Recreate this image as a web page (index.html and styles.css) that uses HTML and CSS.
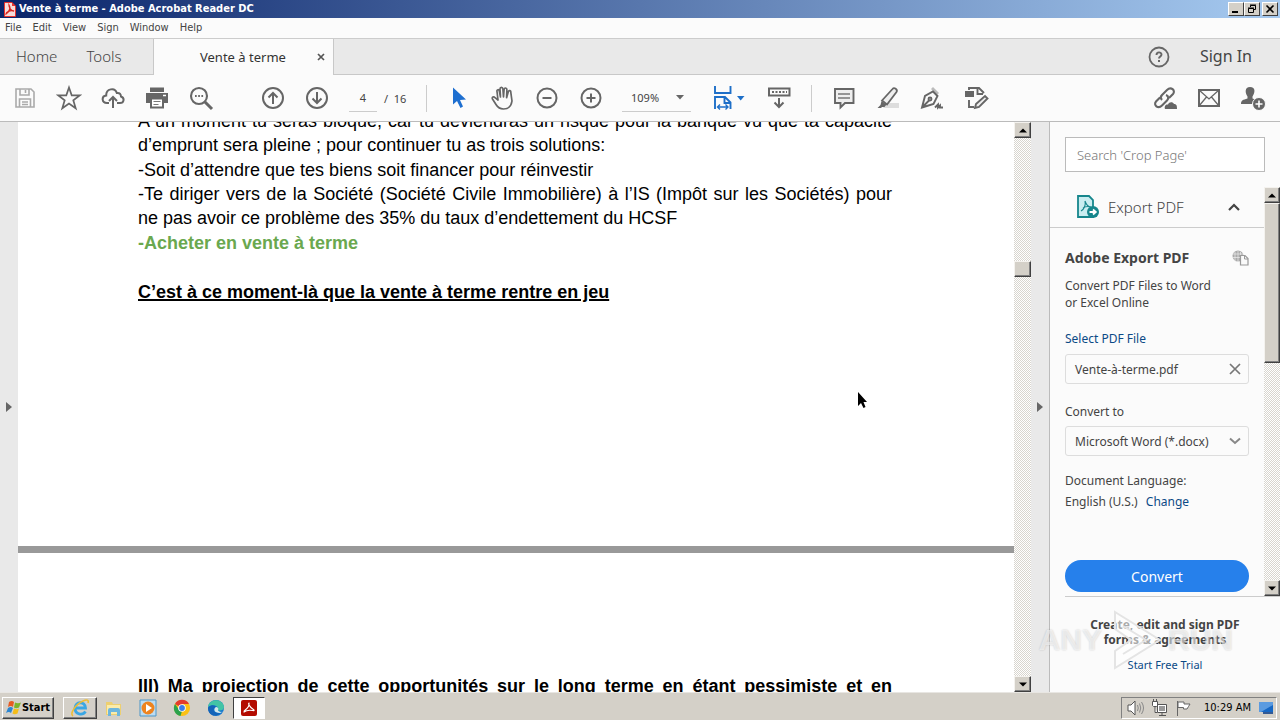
FILE: index.html
```html
<!DOCTYPE html>
<html lang="en">
<head>
<meta charset="utf-8">
<title>Vente à terme - Adobe Acrobat Reader DC</title>
<link rel="stylesheet" href="styles.css">
</head>
<body>
<header class="titlebar">
  <svg class="app-icon" width="12" height="15" viewBox="0 0 12 15"><path d="M1 0h7l4 4v10q0 1-1 1H1q-1 0-1-1V1q0-1 1-1z" fill="#e9322d"/><path d="M1 1h7v3h3v10H1z" fill="#f6dcda"/><path d="M5 3c2 3 1 6-3 9 0-2 4-4 8-3-3 0-5-3-5-6z" fill="none" stroke="#d8231d" stroke-width="1.3"/></svg>
  <h1 class="title">Vente à terme - Adobe Acrobat Reader DC</h1>
  <div class="win-buttons">
    <button class="win-btn" aria-label="Minimize"><svg width="10" height="10" viewBox="0 0 10 10"><path d="M1 8h6" stroke="#000" stroke-width="2"/></svg></button>
    <button class="win-btn" aria-label="Restore"><svg width="10" height="10" viewBox="0 0 10 10" fill="none" stroke="#000"><path d="M3.500 3V1.500h5v4H7M3 1h6M1.500 4.500h5v4h-5zM1 4h6"/></svg></button>
    <button class="win-btn win-close" aria-label="Close"><svg width="10" height="10" viewBox="0 0 10 10"><path d="M1.500 1.500l7 7m0-7l-7 7" stroke="#000" stroke-width="1.600"/></svg></button>
  </div>
</header>
<nav class="menubar">
  <button>File</button><button>Edit</button><button>View</button><button>Sign</button><button>Window</button><button>Help</button>
</nav>
<nav class="tabs">
  <div class="tab-group"><button class="tab">Home</button><button class="tab">Tools</button></div>
  <div class="tab-active"><span>Vente à terme</span><button aria-label="Close tab"><svg width="8" height="8" viewBox="0 0 8 8"><path d="M1 1l6 6m0-6L1 7" stroke="#555" stroke-width="1.700"/></svg></button></div>
  <div class="tab-rest">
    <button aria-label="Help"><svg width="22" height="22" viewBox="0 0 22 22" fill="none" stroke="#666"><circle cx="11" cy="11" r="9.500" stroke-width="1.800"/><path d="M8.500 9c0-3.500 5-3.300 5-.5 0 2-2.500 2-2.500 4" stroke-width="1.900"/><path d="M11 14v2" stroke-width="2"/></svg></button>
    <button class="signin">Sign In</button>
  </div>
</nav>
<div class="toolbar">
  <button class="tool" aria-label="Save"><svg width="24" height="24" viewBox="0 0 24 24" fill="none" stroke="#aaa" stroke-width="1.600"><path d="M3 3h15l3 3v15H3z"/><path d="M7 3v6h9V3M12.500 4v3M6.500 21v-8h11v8M9 16h6M9 18.500h6"/></svg></button>
  <button class="tool" aria-label="Star"><svg width="26" height="26" viewBox="0 0 26 26"><path d="M13 2.500l2.700 7.800h8.200l-6.600 5 2.400 8L13 18.500l-6.700 4.800 2.400-8-6.600-5h8.200z" fill="none" stroke="#666" stroke-width="1.700"/></svg></button>
  <button class="tool" aria-label="Upload"><svg width="24" height="24" viewBox="0 0 24 24" fill="none" stroke="#666" stroke-width="2"><path d="M8 17H6c-5.500 0-5.800-7-.8-7.500C5 2.500 14 1 15.800 7c3-.4 4 1 4.200 3.500C24 12 23 17 19 17h-3"/><path d="M12 22V11m-4 4l4-4 4 4"/></svg></button>
  <button class="tool" aria-label="Print"><svg width="24" height="24" viewBox="0 0 24 24"><path d="M5 1.500h14V6H5zM1 7h22v10h-4v-3H5v3H1z" fill="#666"/><path d="M6 12.500V21.500h12v-9z" fill="#fff" stroke="#666" stroke-width="2"/><path d="M8.500 15.500h7M8.500 18.500h5" stroke="#777" stroke-width="1.200"/><path d="M18 9.500h3" stroke="#fff" stroke-width="1.500"/></svg></button>
  <button class="tool" aria-label="Find"><svg width="26" height="26" viewBox="0 0 26 26" fill="none" stroke="#666"><circle cx="11" cy="11" r="8" stroke-width="2.100"/><path d="M17 17l7 7" stroke-width="3"/><path d="M7 11h1.700m1.500 0h1.700m1.500 0h1.700" stroke-width="2"/></svg></button>
  <button class="tool nav-first" aria-label="Previous page"><svg width="24" height="24" viewBox="0 0 24 24" fill="none" stroke="#666" stroke-width="2"><circle cx="12" cy="12" r="10"/><path d="M12 18V7m-4.500 4.500L12 7l4.500 4.500"/></svg></button>
  <button class="tool" aria-label="Next page"><svg width="24" height="24" viewBox="0 0 24 24" fill="none" stroke="#666" stroke-width="2"><circle cx="12" cy="12" r="10"/><path d="M12 6v11m-4.500-4.500L12 17l4.500-4.500"/></svg></button>
  <input class="page-input" aria-label="Page number" value="4"><span class="page-total">/&nbsp; 16</span>
  <span class="sep"></span>
  <button class="tool" aria-label="Select"><svg width="24" height="24" viewBox="0 0 24 24"><path d="M6 1.500v17l4-3.500 3.500 7 2.500-1.500-3-6.500 6-.5z" fill="#1e6fd0"/></svg></button>
  <button class="tool" aria-label="Pan"><svg width="26" height="26" viewBox="0 0 26 26" fill="none" stroke="#666" stroke-width="1.700" stroke-linejoin="round" stroke-linecap="round"><path d="M8 15L7 6.500C6.600 4.500 8.800 4 9.300 6l1.200 6-.5-8c0-2.300 2.700-2.300 2.900 0l.6 8 .6-7.500c.2-2 2.800-2 2.800.2l-.3 8 1.700-6c.6-1.900 2.800-1.200 2.500.7L22 16c-.8 5.500-4 8-8.500 8-4 0-6-2-7.500-4.500L2.500 14c-1-2 1.300-2.800 2.500-1.300z"/></svg></button>
  <button class="tool" aria-label="Zoom out"><svg width="24" height="24" viewBox="0 0 24 24" fill="none" stroke="#666" stroke-width="2"><circle cx="12" cy="12" r="9.500"/><path d="M7.500 12h9"/></svg></button>
  <button class="tool" aria-label="Zoom in"><svg width="24" height="24" viewBox="0 0 24 24" fill="none" stroke="#666" stroke-width="2"><circle cx="12" cy="12" r="9.500"/><path d="M7.500 12h9M12 7.500v9"/></svg></button>
  <div class="zoom"><select aria-label="Zoom level"><option>109%</option></select><svg width="8" height="5" viewBox="0 0 8 5"><path d="M0 0h8L4 4.500z" fill="#666"/></svg></div>
  <button class="tool tool-wide" aria-label="Fit page"><svg width="32" height="26" viewBox="0 0 32 26" fill="none" stroke="#1e6fc8" stroke-width="1.900"><path d="M2 1v7h15.500V1M2 24V12h10l5.500 5.500V24M11.500 12.500v5.500H17"/><path d="M4.500 22h10.500M7 19.500L4.500 22 7 24.500m5.500-5L15 22l-2.500 2.500" stroke-width="1.400"/><path d="M24 11h7.500L27.700 15.500z" fill="#1e6fc8" stroke="none"/></svg></button>
  <button class="tool" aria-label="Keyboard"><svg width="26" height="26" viewBox="0 0 26 26" fill="none" stroke="#666" stroke-width="2"><path d="M3 3.500h20.500v7H3zM13 13v9M8.500 17.500L13 22l4.500-4.500"/><path d="M6 7h15" stroke-dasharray="2 1.500"/></svg></button>
  <span class="sep"></span>
  <button class="tool" aria-label="Comment"><svg width="24" height="24" viewBox="0 0 24 24"><path d="M3 3h18.500v14H13l-4.500 4.500V17H3z" fill="#eee" stroke="#666" stroke-width="1.900"/><path d="M6 8h12M6 12h12" stroke="#777" stroke-width="1.500"/></svg></button>
  <button class="tool" aria-label="Highlight"><svg width="26" height="26" viewBox="0 0 26 26"><path d="M12 18h12v5H8z" fill="#ddd"/><path d="M7 15.500L17.500 4c1.700-2 5.500.5 4 3L12 19.500z" fill="#eee" stroke="#666" stroke-width="1.800"/><path d="M6.500 16l5 3.500-2 2.500H7l-1 1H2.500l3-3z" fill="#666"/></svg></button>
  <button class="tool" aria-label="Fill and sign"><svg width="26" height="26" viewBox="0 0 26 26" fill="none" stroke="#666" stroke-width="1.900"><path d="M14 2l6 6-2 2-6-6z" fill="#bbb" stroke="none"/><path d="M3 22.500L6 11l8-4.500 4.500 4.500-4 8zM3.500 22l7-7"/><circle cx="11" cy="14" r="1.500"/><path d="M16 22.500l3-3v3l2-2v2h3"/></svg></button>
  <button class="tool" aria-label="Stamp"><svg width="26" height="26" viewBox="0 0 26 26" fill="none" stroke="#666" stroke-width="1.900"><path d="M6 5V3h10l5 5M14.500 3v6H20M6 15v7h5"/><path d="M2 6h9v6H2z" fill="#666" stroke="none"/><path d="M12 23l1-4 9-8 2.500 2.500-8.500 8.500z" fill="#eee"/></svg></button>
  <div class="tool-right">
    <button class="tool" aria-label="Share link"><svg width="26" height="26" viewBox="0 0 26 26" fill="none" stroke="#666" stroke-width="2.100"><path d="M10 15c-2-2-1-4 0-5l5-5c4-4 9 .5 6 4l-4 4M14 10c3 1 2.500 4 1 5.500l-5 5c-4 4-9-.5-6-4l4-4"/><path d="M13 24c-1-3 1-5 3-4.500 1-3 5-3 6-.5 3 0 3 2.500 3 5z" fill="#666" stroke="none"/></svg></button>
    <button class="tool" aria-label="Mail"><svg width="24" height="24" viewBox="0 0 24 24" fill="none" stroke="#666"><path d="M2 4h20v16H2z" stroke-width="2"/><path d="M2 4l10 9L22 4M2 20l7.500-9M22 20l-7.500-9" stroke-width="1.300"/></svg></button>
    <button class="tool" aria-label="Add person"><svg width="26" height="26" viewBox="0 0 26 26"><path d="M10 2c6 0 5 6 2.500 9.500v2L17 15v4H1c0-4 2-4 6.500-5.500v-2C5 8 4.500 2 10 2z" fill="#666"/><circle cx="19" cy="19" r="6.500" fill="#666" stroke="#fbfbfb"/><path d="M19 15.500v7m-3.500-3.500h7" stroke="#fff" stroke-width="1.600"/></svg></button>
  </div>
</div>
<main class="main">
  <button class="rail" aria-label="Show navigation pane"><svg width="6" height="10" viewBox="0 0 6 10"><path d="M0 0v10l6-5z" fill="#666"/></svg></button>
  <article class="doc">
    <section class="page page-first">
      <p class="justify">A un moment tu seras bloqué, car tu deviendras un risque pour la banque vu que ta capacité d’emprunt sera pleine ; pour continuer tu as trois solutions:</p>
      <p class="spaced">-Soit d’attendre que tes biens soit financer pour réinvestir</p>
      <p class="justify">-Te diriger vers de la Société (Société Civile Immobilière) à l’IS (Impôt sur les Sociétés) pour ne pas avoir ce problème des 35% du taux d’endettement du HCSF</p>
      <p class="green spaced">-Acheter en vente à terme</p>
      <h2 class="lead">C’est à ce moment-là que la vente à terme rentre en jeu</h2>
    </section>
    <section class="page page-next">
      <h2 class="fill-line">III) Ma projection de cette opportunités sur le long terme en étant pessimiste et en</h2>
    </section>
  </article>
  <div class="scroll">
    <button class="sb-btn" aria-label="Scroll up"><svg width="8" height="5" viewBox="0 0 8 5"><path d="M0 4.500h8L4 .500z"/></svg></button>
    <span class="track-above"></span><span class="thumb"></span><span class="track-below"></span>
    <button class="sb-btn" aria-label="Scroll down"><svg width="8" height="5" viewBox="0 0 8 5"><path d="M0 .500h8L4 4.500z"/></svg></button>
  </div>
  <button class="rail" aria-label="Hide tools pane"><svg width="6" height="10" viewBox="0 0 6 10"><path d="M0 0v10l6-5z" fill="#666"/></svg></button>
  <aside class="side">
    <input class="search" type="text" aria-label="Search tools" placeholder="Search 'Crop Page'">
    <div class="side-scroll">
      <div class="side-body">
        <button class="export-head">
          <svg width="24" height="26" viewBox="0 0 24 26"><path d="M2 2h11l4 4v17H2z" fill="#c9edf0" stroke="#16868c" stroke-width="1.800"/><path d="M9 7c1 5-1 8-4 10m2-3c3-2 5-2 8-1-3 0-5-3-6-6" fill="none" stroke="#16868c" stroke-width="1.100"/><circle cx="17" cy="18" r="6" fill="#16868c"/><path d="M13.500 18h6M17 15.500l2.800 2.500-2.800 2.500" fill="none" stroke="#fff" stroke-width="1.800"/></svg>
          <span>Export PDF</span>
          <svg class="chev" width="12" height="8" viewBox="0 0 12 8"><path d="M1 7l5-5 5 5" fill="none" stroke="#444" stroke-width="2.200"/></svg>
        </button>
        <div class="side-content">
          <div class="side-title"><h2>Adobe Export PDF</h2><svg width="17" height="16" viewBox="0 0 17 16"><circle cx="6" cy="6" r="5.500" fill="#aaa"/><path d="M1 4h10M0 7.500h11M6 1v11M3 2v9M8.500 2v8" stroke="#eee" stroke-width=".7"/><path d="M8.500 5.500H13l3 3v6.500H8.500z" fill="#fafafa" stroke="#999" stroke-width="1.200"/><path d="M12.500 5.500V9H16" fill="none" stroke="#999"/></svg></div>
          <p class="desc">Convert PDF Files to Word<br>or Excel Online</p>
          <a class="select-link" href="#">Select PDF File</a>
          <div class="file-box"><span>Vente-à-terme.pdf</span><button aria-label="Remove file"><svg width="12" height="12" viewBox="0 0 12 12"><path d="M1 1l10 10m0-10L1 11" stroke="#777" stroke-width="1.700"/></svg></button></div>
          <label class="field-label" for="format">Convert to</label>
          <div class="format-box"><select id="format"><option>Microsoft Word (*.docx)</option></select><svg width="12" height="8" viewBox="0 0 12 8"><path d="M1 1.500l5 4.500 5-4.500" fill="none" stroke="#888" stroke-width="2"/></svg></div>
          <p class="language">Document Language:</p>
          <p class="locale">English (U.S.) <a href="#">Change</a></p>
          <button class="convert">Convert</button>
        </div>
      </div>
      <div class="scroll scroll-side">
        <button class="sb-btn" aria-label="Scroll up"><svg width="8" height="5" viewBox="0 0 8 5"><path d="M0 4.500h8L4 .500z"/></svg></button>
        <span class="thumb thumb-long"></span><span class="track-below"></span>
        <button class="sb-btn" aria-label="Scroll down"><svg width="8" height="5" viewBox="0 0 8 5"><path d="M0 .500h8L4 4.500z"/></svg></button>
      </div>
    </div>
    <div class="promo"><p>Create, edit and sign PDF<br>forms &amp; agreements</p><a href="#">Start Free Trial</a></div>
  </aside>
</main>
<div class="watermark"><span>ANY</span><svg width="62" height="64" viewBox="0 0 62 64"><path d="M11 4L56 32 11 60V43l16-11-16-11z" fill="#fff" fill-opacity=".55" stroke="#e4e4e4" stroke-width="2"/><path d="M19 18l23 14-23 14" fill="none" stroke="#e4e4e4" stroke-width="2"/></svg><span>RUN</span></div>
<footer class="taskbar">
  <button class="start"><svg width="16" height="16" viewBox="0 0 16 16"><path d="M3 2q3-2 5 0L7 7Q5 5 2 7z" fill="#e75b22"/><path d="M9 2.500q3 1.500 6 0l-2 5q-3 1.500-5 0z" fill="#7bb52b"/><path d="M2 8q3-2 5 0l-2 5q-2-2-5 0z" fill="#2c86d1"/><path d="M8 8.500q3 1.500 5 0l-1.500 5q-3 1.500-5 0z" fill="#f5bd18"/></svg>Start</button>
  <button class="task task-raised" aria-label="Internet Explorer"><svg width="20" height="20" viewBox="0 0 20 20" fill="none"><path d="M15.500 13.500c-3 4.500-10.500 3-10.500-3.500s10-7.500 10.500 0H6" stroke="#3aa7e4" stroke-width="2.800"/><path d="M3 18c-4-2 3-12 10-15 4-2 6-1 5 2" stroke="#edbd35" stroke-width="1.600"/></svg></button>
  <button class="task" aria-label="Explorer"><svg width="18" height="18" viewBox="0 0 18 18"><path d="M1 3h6l1 2h8v11H1z" fill="#edcf70"/><path d="M2 6h13v9H2z" fill="#fbebaa"/><path d="M3 17v-6q0-2 2-2h8q2 0 2 2v6h-3v-4H6v4z" fill="#6eb6dd"/></svg></button>
  <button class="task" aria-label="Media Player"><svg width="18" height="18" viewBox="0 0 18 18"><path d="M1 1h16v16H1z" fill="#bcdcf2" stroke="#4c96c8"/><circle cx="9" cy="9" r="6.500" fill="#ee8420"/><path d="M7 5v8l6-4z" fill="#fff"/></svg></button>
  <button class="task" aria-label="Chrome"><svg width="18" height="18" viewBox="0 0 18 18"><circle cx="9" cy="9" r="8" fill="#fbc116"/><path d="M9 9L2 5a8 8 0 0 1 14 0H9z" fill="#e33b2e"/><path d="M2 5l5 7 2 0-1.500 5A8 8 0 0 1 2 5z" fill="#2ba24c"/><circle cx="9" cy="9" r="3.800" fill="#fff"/><circle cx="9" cy="9" r="2.900" fill="#3b7de8"/></svg></button>
  <button class="task" aria-label="Edge"><svg width="18" height="18" viewBox="0 0 18 18"><circle cx="9" cy="9" r="8" fill="#1678ce"/><path d="M1 8C2-1 16-1 17 8c0 4-5 4-6 3 1-5-6-6-10-3z" fill="#43c4a5"/><path d="M1 9c2-4 7-3 8-1-4 1-3 7 4 6-2 3-6 3-8 2s-4-3-4-7z" fill="#1464b8"/><path d="M9 8c-3 2-2 6 4 6l3-1.500c-2 1-5 0-5-1.500 1-1 0-3-2-3z" fill="#d5e8ea"/></svg></button>
  <button class="task task-active" aria-label="Acrobat Reader"><svg width="16" height="16" viewBox="0 0 16 16"><rect width="16" height="16" rx="2" fill="#b30b00"/><path d="M8 3c-1 0 0 4 5 7 1 2-5-2-10 2-1-2 6-3 5-9z" fill="none" stroke="#fff" stroke-width="1.100"/></svg></button>
  <div class="tray">
    <svg width="18" height="18" viewBox="0 0 18 18" fill="#fff" stroke="#555"><path d="M1 6h3l4-4v14l-4-4H1z"/><path d="M10.500 6q1.500 3 0 6M12.500 4.500q2.500 4.500 0 9M14.500 3q4 6 0 12" fill="none" stroke="#888"/></svg>
    <svg width="18" height="18" viewBox="0 0 18 18" fill="#fff" stroke="#555"><path d="M6.500 5.500h9v8h-9zM8 16.500h7M11 13.500v3M1.500 2.500h5v4l-1 1h-3l-1-1zM4 7.500v6h2M2.500 0v2M5.500 0v2"/><path d="M8 7h6v5H8z" fill="#999" stroke="none"/></svg>
    <svg width="18" height="18" viewBox="0 0 18 18" fill="#fff" stroke="#666"><path d="M2.500 2v15M3 3h6v2l6 0-1.500 2.500L12 10H8.500V8.500H3z"/></svg>
    <time>10:29 AM</time>
    <svg width="16" height="16" viewBox="0 0 16 16"><path d="M1 2h14v10H1z" fill="#1667c4"/><path d="M1 2h14v3L3 12H1z" fill="#5b9be0"/><path d="M5 12h10v2H5z" fill="#335a94"/></svg>
  </div>
</footer>
<svg class="pointer" width="12" height="18" viewBox="0 0 12 18"><path d="M1 1v14l3-3 2.500 5 2-1L6.500 11H10z"/></svg>
</body>
</html>
```
FILE: styles.css
```css
* { box-sizing: border-box; }
body {
  margin: 0;
  height: 100vh;
  display: flex;
  flex-direction: column;
  overflow: hidden;
  background: #fbfbfb;
  color: #444;
  font: 12px/17px "Noto Sans", "Open Sans", sans-serif;
}
button { margin: 0; padding: 0; border: 0; background: none; color: inherit; font: inherit; }
input, select { font: inherit; color: inherit; }
p, h1, h2 { margin: 0; }
a { color: #0b4a86; text-decoration: none; }
svg { display: block; flex: none; }

.titlebar {
  flex: none; height: 18px; display: flex; align-items: center; padding: 0 2px 0 4px; gap: 3px;
  background: linear-gradient(90deg, #0a246a, #a6caf0);
}
.title { flex: 1; color: #fff; font: bold 11px/18px "DejaVu Sans Condensed", "DejaVu Sans", sans-serif; }
.win-buttons { display: flex; }
.win-btn {
  width: 16px; height: 14px; display: flex; align-items: center; justify-content: center;
  background: #d4d0c8; border: 1px solid; border-color: #fff #404040 #404040 #fff;
}
.win-close { margin-left: 2px; }

.menubar {
  flex: none; height: 20px; display: flex; gap: 11px; padding: 0 5px;
  font: 11px/20px "DejaVu Sans Condensed", "DejaVu Sans", sans-serif;
}

.tabs { flex: none; height: 37px; display: flex; background: #e9e9e9; border-top: 1px solid #ccc; font-size: 15px; }
.tab-group { width: 154px; display: flex; gap: 29px; padding-left: 16px; border-right: 1px solid #c8c8c8; border-bottom: 1px solid #c8c8c8; }
.tab { font-weight: 300; }
.tab-active { width: 179px; display: flex; align-items: center; justify-content: space-between; padding: 0 8px 0 46px; background: #fbfbfb; font-size: 13px; color: #333; }
.tab-rest {
  flex: 1; display: flex; align-items: center; justify-content: flex-end; gap: 30px; padding-right: 28px;
  border-left: 1px solid #c8c8c8; border-bottom: 1px solid #c8c8c8;
}
.signin { font-size: 16px; }

.toolbar { flex: none; height: 47px; display: flex; align-items: center; padding: 0 5px 0 3px; border-bottom: 1px solid #bbb; }
.tool { flex: none; width: 44px; height: 44px; display: flex; align-items: center; justify-content: center; }
.tool-wide { width: 56px; margin-left: 10px; }
.nav-first { margin-left: 28px; }
.page-input { width: 28px; height: 27px; margin-left: 10px; padding: 0; border: 0; border-bottom: 1px solid #ccc; background: none; text-align: center; font-size: 11px; }
.page-total { width: 32px; margin-left: 7px; font-size: 11px; }
.sep { flex: none; width: 1px; height: 27px; margin: 0 10px; background: #ccc; }
.zoom { width: 69px; height: 27px; margin-left: 9px; padding-right: 7px; display: flex; align-items: center; border-bottom: 1px solid #ccc; font-size: 11px; }
.zoom select { flex: 1; min-width: 0; appearance: none; border: 0; padding: 0 0 0 9px; background: none; }
.tool-right { display: flex; margin-left: auto; }

.main { flex: 1; min-height: 0; display: flex; }
.rail { flex: none; width: 18px; display: flex; align-items: center; justify-content: center; background: #e9e9e9; }
.doc {
  flex: 1; min-width: 0; overflow: hidden; display: flex; flex-direction: column;
  background: #fff; color: #000; font: 18px/24px "Liberation Sans", Arial, sans-serif;
}
.page { padding: 0 122px 0 120px; }
/* The reader is scrolled partway through a line, so the page starts above the view. */
.page-first { flex: none; margin-top: -13px; height: 444px; border-bottom: 7px solid #999; }
.page-next { flex: none; padding-top: 121px; }
.justify { text-align: justify; }
.spaced { margin: 1px 0 0; }
.green { color: #6aa84f; font-weight: bold; }
.lead { margin-top: 25px; font-size: 18px; text-decoration: underline; text-decoration-thickness: 2px; }
.fill-line { font-size: 18px; text-align-last: justify; white-space: nowrap; }

.scroll {
  flex: none; width: 17px; display: flex; flex-direction: column;
  background: conic-gradient(#fff 25%, #d8d5ce 0 50%, #fff 0 75%, #d8d5ce 0) 0 0 / 2px 2px;
}
.scroll-side { width: 16px; }
.sb-btn, .thumb { flex: none; height: 16px; background: #d4d0c8; border: 1px solid; border-color: #f4f2ee #404040 #404040 #f4f2ee; box-shadow: inset -1px -1px #808080; }
.sb-btn { display: flex; align-items: center; justify-content: center; }
.track-above { flex: 123; }
.track-below { flex: 398; }
.thumb-long { height: 39%; }

.side { flex: none; width: 231px; display: flex; flex-direction: column; border-left: 1px solid #bbb; }
.search { flex: none; height: 35px; margin: 15px; padding: 0 11px; border: 1px solid #bbb; background: #fff; font-size: 13px; font-weight: 300; }
.search::placeholder { color: #777; opacity: 1; }
.side-scroll { flex: 1; min-height: 0; display: flex; }
.side-body { flex: 1; min-width: 0; overflow: hidden; }
.export-head { width: 100%; height: 41px; display: flex; align-items: center; gap: 8px; padding: 0 24px 0 26px; border-bottom: 1px solid #ccc; font-size: 15px; font-weight: 300; }
.chev { margin-left: auto; }
.side-content { padding: 20px 15px 4px; display: flex; flex-direction: column; }
.side-title { display: flex; align-items: center; justify-content: space-between; }
.side-title h2 { font-size: 14px; line-height: 20px; white-space: nowrap; }
.desc { margin-top: 9px; white-space: nowrap; }
.select-link { margin-top: 19px; }
.file-box, .format-box { display: flex; align-items: center; height: 30px; border: 1px solid #ddd; border-radius: 3px; padding: 0 7px 0 9px; }
.file-box { margin-top: 7px; justify-content: space-between; }
.field-label { margin-top: 19px; }
.format-box { margin-top: 6px; }
.format-box select { flex: 1; min-width: 0; appearance: none; border: 0; padding: 0; background: none; }
.language { margin-top: 16px; }
.locale { margin-top: 4px; }
.locale a { margin-left: 5px; }
.convert { height: 32px; margin-top: 50px; border-radius: 16px; background: #2680eb; color: #fff; font-size: 14px; }
.promo { flex: none; height: 96px; margin-left: 15px; padding: 20px 15px 0 0; border-top: 1px solid #ccc; text-align: center; }
.promo p { font-weight: bold; line-height: 15px; white-space: nowrap; }
.promo a { display: block; margin-top: 9px; font-size: 11px; }

.watermark {
  position: absolute; right: 47px; bottom: 48px; display: flex; align-items: center; gap: 2px; pointer-events: none;
  color: rgba(255, 255, 255, .6); font: bold 30px/64px "Liberation Sans Narrow", "Liberation Sans", sans-serif;
  text-shadow: 0 0 2px rgba(0, 0, 0, .2);
}
.pointer { position: absolute; left: 857px; top: 391px; }

.taskbar { flex: none; height: 28px; display: flex; align-items: center; padding: 2px 3px 0 2px; background: #d4d0c8; border-top: 1px solid #e8e6e2; }
.start, .task-raised { border: 1px solid; border-color: #fff #404040 #404040 #fff; box-shadow: inset -1px -1px #808080; }
.start { width: 52px; height: 22px; margin-right: 9px; display: flex; align-items: center; justify-content: center; color: #000; font: bold 11px/18px "DejaVu Sans Condensed", "DejaVu Sans", sans-serif; }
.task { width: 34px; height: 22px; display: flex; align-items: center; justify-content: center; }
.task-active { width: 32px; background: #fff; border: 1px solid; border-color: #404040 #fff #fff #404040; }
.tray { margin-left: auto; height: 22px; display: flex; align-items: center; gap: 6px; padding: 0 2px 0 5px; border: 1px solid; border-color: #808080 #fff #fff #808080; color: #000; font: 11px/20px "DejaVu Sans Condensed", "DejaVu Sans", sans-serif; }
.tray time { margin: 0 1px 0 5px; }
```
